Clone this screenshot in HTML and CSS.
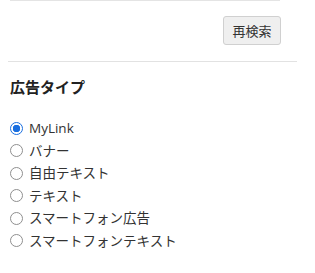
FILE: index.html
```html
<!DOCTYPE html>
<html lang="ja">
<head>
    <meta charset="UTF-8">
    <title>広告タイプ</title>
    <link rel="stylesheet" href="styles.css">
</head>
<body>
    <div class="panel">
        <div class="search-box"></div>
        <div class="search-actions">
            <button class="search-btn">再検索</button>
        </div>
    </div>

    <div class="filter">
        <h3 class="filter-title">広告タイプ</h3>
        <ul class="options">
            <li><label><input type="radio" name="adtype" checked> MyLink</label></li>
            <li><label><input type="radio" name="adtype"> バナー</label></li>
            <li><label><input type="radio" name="adtype"> 自由テキスト</label></li>
            <li><label><input type="radio" name="adtype"> テキスト</label></li>
            <li><label><input type="radio" name="adtype"> スマートフォン広告</label></li>
            <li><label><input type="radio" name="adtype"> スマートフォンテキスト</label></li>
        </ul>
    </div>
</body>
</html>
```

FILE: styles.css
```css
body {
    margin: 0;
    background-color: #fff;
    color: #333;
    font-family: "Open Sans", "Noto Sans CJK JP", sans-serif;
    font-size: 13.5px;
}

.panel {
    width: 289px;
    margin-left: 8px;
    border-bottom: 1px solid #e2e2e2;
}

.search-box {
    width: 270px;
    margin-left: 2px;
    height: 1px;
    background-color: #e4e4e4;
}

.search-actions {
    display: flex;
    justify-content: flex-end;
    padding: 15px 16px 16px 0;
}

.search-btn {
    width: 58px;
    height: 29px;
    padding: 0;
    background-color: #efefef;
    border: 1px solid #d0d0d0;
    border-radius: 3px;
    color: #333;
    font-family: "Noto Sans CJK JP", sans-serif;
    font-size: 13px;
}

.filter {
    padding-left: 10px;
}

.filter-title {
    margin: 15px 0 0;
    font-family: "Noto Sans CJK JP", sans-serif;
    font-size: 15px;
    font-weight: bold;
    line-height: 20px;
    color: #222;
}

.options {
    list-style: none;
    margin: 20px 0 0;
    padding: 0;
}

.options li {
    height: 22.5px;
    line-height: 22px;
}

.options label {
    display: flex;
    align-items: center;
    gap: 6px;
}

.options input {
    appearance: none;
    margin: 0;
    width: 13px;
    height: 13px;
    border: 1px solid #8f8f8f;
    border-radius: 50%;
    background-color: #fff;
}

.options input:checked {
    border-color: #1a6fe0;
    background: radial-gradient(circle, #1a6fe0 0, #1a6fe0 3.5px, #fff 4px);
}
```
